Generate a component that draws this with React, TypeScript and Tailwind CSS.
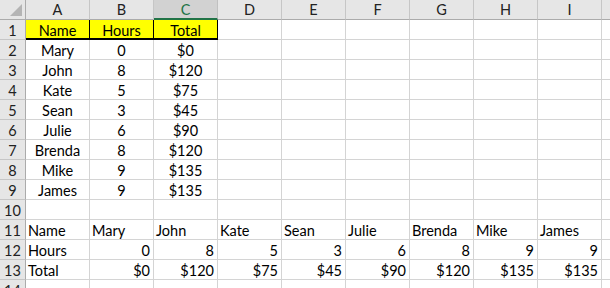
import React from "react";

const columns = ["A", "B", "C", "D", "E", "F", "G", "H", "I", ""];

type Cell = { text: string; align?: "left" | "center" | "right"; yellow?: boolean };

const people = [
  ["Mary", "0", "$0"],
  ["John", "8", "$120"],
  ["Kate", "5", "$75"],
  ["Sean", "3", "$45"],
  ["Julie", "6", "$90"],
  ["Brenda", "8", "$120"],
  ["Mike", "9", "$135"],
  ["James", "9", "$135"],
];

const rows: Cell[][] = [
  [
    { text: "Name", align: "center", yellow: true },
    { text: "Hours", align: "center", yellow: true },
    { text: "Total", align: "center", yellow: true },
  ],
  ...people.map((p) => p.map((t) => ({ text: t, align: "center" as const }))),
  [],
  [{ text: "Name", align: "left" }, ...people.map((p) => ({ text: p[0], align: "left" as const }))],
  [{ text: "Hours", align: "left" }, ...people.map((p) => ({ text: p[1], align: "right" as const }))],
  [{ text: "Total", align: "left" }, ...people.map((p) => ({ text: p[2], align: "right" as const }))],
  [],
];

const alignClass = {
  left: "text-left pl-[2px]",
  center: "text-center",
  right: "text-right pr-[3px]",
};

export default function App() {
  return (
    <div
      className="w-[610px] h-[288px] overflow-hidden bg-white text-[14.5px] leading-[20px] text-black"
      style={{ fontFamily: "Lato, 'Open Sans', sans-serif" }}
    >
      {/* Column headers */}
      <div className="flex h-[20px]">
        <div className="relative w-[26px] h-[20px] shrink-0 bg-[#e6e6e6] border-r border-b border-[#ababab]">
          <svg className="absolute right-[3px] bottom-[3px]" width="12" height="12" viewBox="0 0 12 12">
            <polygon points="12,0 12,12 0,12" fill="#b4b4b4" />
          </svg>
        </div>
        {columns.map((c, i) =>
          c === "C" ? (
            <div
              key={i}
              className="w-[64px] h-[20px] shrink-0 text-center bg-[#d2d2d2] border-r border-[#c0c0c0] border-b-2 border-b-[#217346] text-[#217346]"
            >
              {c}
            </div>
          ) : (
            <div
              key={i}
              className="w-[64px] h-[20px] shrink-0 text-center bg-[#e6e6e6] border-r border-[#c6c6c6] border-b border-b-[#ababab] text-[#222]"
            >
              {c}
            </div>
          )
        )}
      </div>

      {rows.map((cells, r) => (
        <div key={r} className="flex h-[20px]">
          <div className="w-[26px] h-[20px] shrink-0 pt-[1px] text-center overflow-hidden bg-[#e6e6e6] border-r border-[#ababab] border-b border-b-[#c6c6c6] text-[#222]">
            {r + 1}
          </div>
          {columns.map((_, i) => {
            const cell = cells[i];
            if (cell?.yellow) {
              return (
                <div
                  key={i}
                  className="w-[64px] h-[20px] shrink-0 pt-[1px] text-center overflow-hidden bg-[#ffff00] border-r border-r-black border-b-2 border-b-black"
                >
                  {cell.text}
                </div>
              );
            }
            return (
              <div
                key={i}
                className={`w-[64px] h-[20px] shrink-0 pt-[1px] overflow-hidden whitespace-nowrap border-r border-b border-[#d4d4d4] ${
                  cell ? alignClass[cell.align ?? "left"] : ""
                }`}
              >
                {cell?.text}
              </div>
            );
          })}
        </div>
      ))}
    </div>
  );
}
